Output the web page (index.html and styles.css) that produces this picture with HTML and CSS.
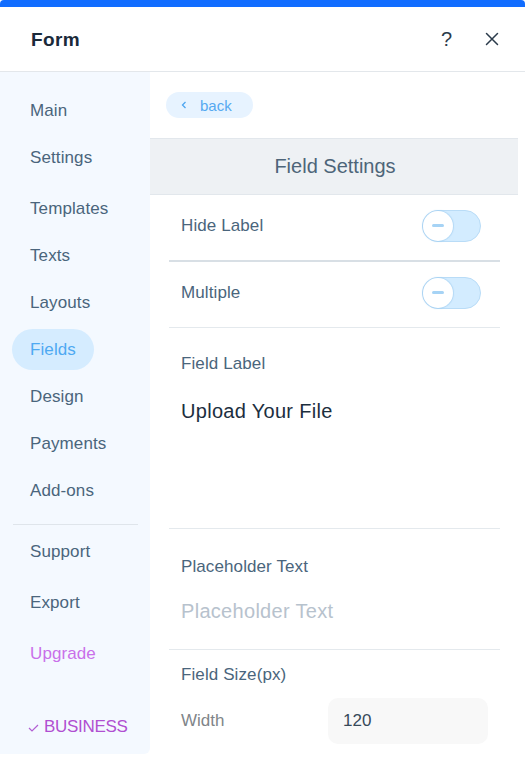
FILE: index.html
```html
<!DOCTYPE html>
<html lang="en">
<head>
<meta charset="utf-8">
<title>Form</title>
<link rel="stylesheet" href="styles.css">
</head>
<body>
<div class="panel">
  <div class="topbar"></div>
  <header class="header">
    <h1 class="title">Form</h1>
    <div class="header-actions">
      <span class="help">?</span>
      <svg class="close" width="14" height="14" viewBox="0 0 14 14"><path d="M1.5 1.5 L12.5 12.5 M12.5 1.5 L1.5 12.5" stroke="#2b3b4b" stroke-width="1.5" fill="none" stroke-linecap="round"/></svg>
    </div>
  </header>
  <div class="body">
    <nav class="sidebar">
      <div class="nav-group">
        <div class="nav-item">Main</div>
        <div class="nav-item">Settings</div>
        <div class="nav-item nav-item-tall">Templates</div>
        <div class="nav-item">Texts</div>
        <div class="nav-item">Layouts</div>
        <div class="nav-item"><span class="nav-pill">Fields</span></div>
        <div class="nav-item">Design</div>
        <div class="nav-item">Payments</div>
        <div class="nav-item">Add-ons</div>
      </div>
      <div class="nav-divider"></div>
      <div class="nav-group nav-group-lower">
        <div class="nav-item nav-item-low">Support</div>
        <div class="nav-item nav-item-low">Export</div>
        <div class="nav-item nav-item-low nav-upgrade">Upgrade</div>
      </div>
      <div class="nav-business">
        <svg width="11" height="8" viewBox="0 0 11 8"><path d="M1 4 L4 7 L10 1" stroke="#b25fd3" stroke-width="1.2" fill="none"/></svg>
        <span>BUSINESS</span>
      </div>
    </nav>
    <main class="content">
      <div class="back-wrap">
        <button class="back">
          <svg width="6" height="8" viewBox="0 0 6 8"><path d="M4.5 1 L1.5 4 L4.5 7" stroke="#4ea5f0" stroke-width="1.3" fill="none"/></svg>
          <span>back</span>
        </button>
      </div>
      <div class="section-head">Field Settings</div>
      <div class="row">
        <span class="label">Hide Label</span>
        <span class="toggle"><span class="knob"></span></span>
      </div>
      <div class="divider divider-strong"></div>
      <div class="row row-2">
        <span class="label">Multiple</span>
        <span class="toggle"><span class="knob"></span></span>
      </div>
      <div class="divider"></div>
      <div class="field field-label">
        <div class="label">Field Label</div>
        <div class="value">Upload Your File</div>
      </div>
      <div class="divider"></div>
      <div class="field field-placeholder">
        <div class="label">Placeholder Text</div>
        <div class="value value-muted">Placeholder Text</div>
      </div>
      <div class="divider"></div>
      <div class="field field-size">
        <div class="label">Field Size(px)</div>
        <div class="size-row">
          <span class="size-label">Width</span>
          <span class="size-input">120</span>
        </div>
      </div>
    </main>
  </div>
</div>
</body>
</html>
```

FILE: styles.css
```css
* { box-sizing: border-box; }
html, body { margin: 0; padding: 0; background: #fff; }
body {
  font-family: "Liberation Sans", Arial, sans-serif;
  width: 525px;
  height: 758px;
  overflow: hidden;
}
.panel { display: flex; flex-direction: column; height: 758px; }
.topbar {
  height: 7px;
  background: #116dff;
  border-radius: 4px 4px 0 0;
  flex: none;
}
.header {
  height: 65px;
  flex: none;
  display: flex;
  align-items: center;
  justify-content: space-between;
  padding: 0 26px 0 31px;
  border-bottom: 1px solid #e3e7eb;
}
.title {
  margin: 0;
  font-size: 19px;
  font-weight: bold;
  color: #1a2a3a;
  letter-spacing: 0.4px;
  padding-top: 1px;
}
.header-actions { display: flex; align-items: center; gap: 33px; padding-bottom: 1px; }
.help { font-size: 20px; color: #2b3b4b; line-height: 1; }
.close { display: block; }

.body { flex: 1; display: flex; min-height: 0; }
.sidebar {
  width: 150px;
  flex: none;
  background: #f4f9ff;
  border-bottom-right-radius: 6px;
  margin-bottom: 4px;
  padding: 15px 0 0 12px;
  display: flex;
  flex-direction: column;
}
.nav-item {
  height: 47px;
  display: flex;
  align-items: center;
  padding-left: 18px;
  font-size: 17px;
  color: #4a657c;
  letter-spacing: 0.1px;
}
.nav-item-tall { height: 51px; padding-top: 4px; }
.nav-pill {
  margin-left: -18px;
  height: 41px;
  width: 82px;
  border-radius: 21px;
  background: #d5ecff;
  color: #4ea9f2;
  display: flex;
  align-items: center;
  padding-left: 18px;
}
.nav-divider {
  height: 1px;
  background: #dfe5eb;
  width: 125px;
  margin: 10px 0 0 1px;
}
.nav-group-lower { padding-top: 1px; }
.nav-item-low { height: 51px; }
.nav-upgrade { color: #c970ea; }
.nav-business {
  margin-top: 38px;
  display: flex;
  align-items: center;
  gap: 5px;
  padding-left: 16px;
  font-size: 17px;
  color: #b04fd1;
  letter-spacing: -0.3px;
}
.nav-business svg { margin-top: 1px; }

.content { flex: 1; display: flex; flex-direction: column; padding-right: 25px; }
.back-wrap { padding: 20px 0 0 16px; height: 66px; }
.back {
  display: inline-flex;
  align-items: center;
  gap: 13px;
  height: 26px;
  width: 87px;
  padding: 0 0 0 15px;
  border: none;
  border-radius: 13px;
  background: #e7f3ff;
  color: #56a9f1;
  font-family: inherit;
  font-size: 15px;
}
.section-head {
  margin-right: -18px;
  height: 57px;
  background: #eef1f4;
  border-top: 1px solid #e2e7ec;
  border-bottom: 1px solid #e2e7ec;
  display: flex;
  align-items: center;
  justify-content: center;
  font-size: 20px;
  color: #4d6579;
  padding-left: 2px;
}
.row {
  height: 65px;
  display: flex;
  align-items: center;
  justify-content: space-between;
  margin-left: 19px;
  padding: 0 19px 4px 12px;
}
.row-2 { height: 65px; padding-bottom: 3px; }
.label { font-size: 17px; color: #4a657c; letter-spacing: 0.1px; }
.toggle {
  width: 59px;
  height: 32px;
  border-radius: 16px;
  background: #d3ecff;
  border: 1px solid #b9dcf7;
  position: relative;
  display: block;
}
.knob {
  position: absolute;
  left: 0;
  top: 0;
  width: 30px;
  height: 30px;
  border-radius: 50%;
  background: #fff;
  box-shadow: 0 0 1px 1px rgba(160, 205, 240, 0.6);
}
.knob::after {
  content: "";
  position: absolute;
  left: 9px;
  top: 13px;
  width: 12px;
  height: 3px;
  border-radius: 2px;
  background: #a6d3f5;
}
.divider { height: 1px; background: #e4e9ed; margin-left: 19px; flex: none; }
.divider-strong { height: 2px; background: #d8dfe5; }

.field { margin-left: 19px; padding-left: 12px; }
.field .label { line-height: 20px; }
.value { font-size: 20px; line-height: 24px; color: #1c2e3e; letter-spacing: 0.3px; }
.value-muted { color: #b7c2cd; }
.field-label { height: 200px; padding-top: 26px; }
.field-label .value { margin-top: 25px; }
.field-placeholder { height: 120px; padding-top: 28px; }
.field-placeholder .value { margin-top: 22px; }
.field-size { padding-top: 15px; }
.size-row { display: flex; align-items: center; margin-top: 13px; }
.size-label { width: 147px; font-size: 17px; color: #808589; }
.size-input {
  width: 160px;
  height: 46px;
  border-radius: 10px;
  background: #f8f8f8;
  display: flex;
  align-items: center;
  padding-left: 15px;
  font-size: 17px;
  color: #37495a;
}
```
